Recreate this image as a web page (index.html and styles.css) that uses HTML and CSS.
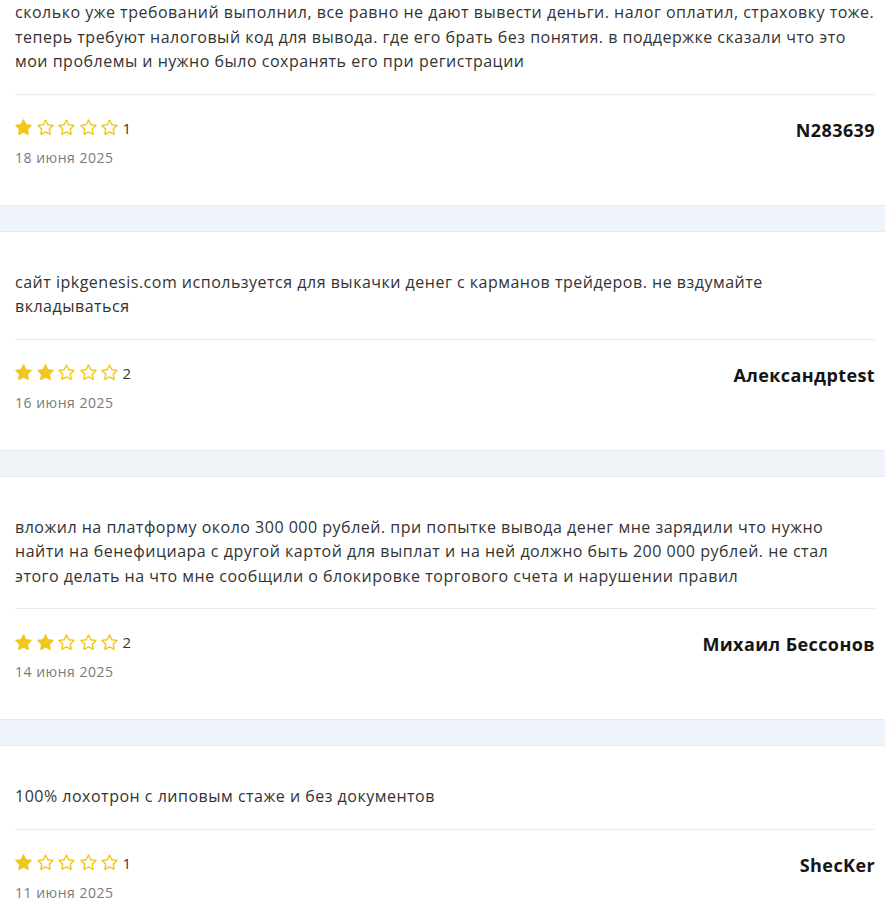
FILE: index.html
```html
<!DOCTYPE html>
<html lang="ru">
<head>
    <meta charset="UTF-8">
    <meta name="viewport" content="width=device-width, initial-scale=1.0">
    <title>Отзывы</title>
    <link rel="stylesheet" href="styles.css">
</head>
<body>

<svg width="0" height="0" class="defs">
    <defs>
        <path id="star" d="M12 2.5l2.94 5.96 6.56.95-4.75 4.63 1.12 6.54L12 17.49l-5.87 3.09 1.12-6.54L2.5 9.41l6.56-.95L12 2.5z"/>
    </defs>
</svg>

<div class="review review-first">
    <p class="review-text">сколько уже требований выполнил, все равно не дают вывести деньги. налог оплатил, страховку тоже. теперь требуют налоговый код для вывода. где его брать без понятия. в поддержке сказали что это мои проблемы и нужно было сохранять его при регистрации</p>
    <div class="review-footer">
        <div class="review-meta">
            <div class="rating">
                <svg class="star full" viewBox="0 0 24 24"><use href="#star"/></svg>
                <svg class="star" viewBox="0 0 24 24"><use href="#star"/></svg>
                <svg class="star" viewBox="0 0 24 24"><use href="#star"/></svg>
                <svg class="star" viewBox="0 0 24 24"><use href="#star"/></svg>
                <svg class="star" viewBox="0 0 24 24"><use href="#star"/></svg>
                <span class="rating-count">1</span>
            </div>
            <div class="review-date">18 июня 2025</div>
        </div>
        <div class="review-author">N283639</div>
    </div>
</div>
<div class="review-gap"></div>

<div class="review">
    <p class="review-text">сайт ipkgenesis.com используется для выкачки денег с карманов трейдеров. не вздумайте вкладываться</p>
    <div class="review-footer">
        <div class="review-meta">
            <div class="rating">
                <svg class="star full" viewBox="0 0 24 24"><use href="#star"/></svg>
                <svg class="star full" viewBox="0 0 24 24"><use href="#star"/></svg>
                <svg class="star" viewBox="0 0 24 24"><use href="#star"/></svg>
                <svg class="star" viewBox="0 0 24 24"><use href="#star"/></svg>
                <svg class="star" viewBox="0 0 24 24"><use href="#star"/></svg>
                <span class="rating-count">2</span>
            </div>
            <div class="review-date">16 июня 2025</div>
        </div>
        <div class="review-author">Александрtest</div>
    </div>
</div>
<div class="review-gap"></div>

<div class="review">
    <p class="review-text">вложил на платформу около 300 000 рублей. при попытке вывода денег мне зарядили что нужно найти на бенефициара с другой картой для выплат и на ней должно быть 200 000 рублей. не стал этого делать на что мне сообщили о блокировке торгового счета и нарушении правил</p>
    <div class="review-footer">
        <div class="review-meta">
            <div class="rating">
                <svg class="star full" viewBox="0 0 24 24"><use href="#star"/></svg>
                <svg class="star full" viewBox="0 0 24 24"><use href="#star"/></svg>
                <svg class="star" viewBox="0 0 24 24"><use href="#star"/></svg>
                <svg class="star" viewBox="0 0 24 24"><use href="#star"/></svg>
                <svg class="star" viewBox="0 0 24 24"><use href="#star"/></svg>
                <span class="rating-count">2</span>
            </div>
            <div class="review-date">14 июня 2025</div>
        </div>
        <div class="review-author">Михаил Бессонов</div>
    </div>
</div>
<div class="review-gap"></div>

<div class="review">
    <p class="review-text">100% лохотрон с липовым стаже и без документов</p>
    <div class="review-footer">
        <div class="review-meta">
            <div class="rating">
                <svg class="star full" viewBox="0 0 24 24"><use href="#star"/></svg>
                <svg class="star" viewBox="0 0 24 24"><use href="#star"/></svg>
                <svg class="star" viewBox="0 0 24 24"><use href="#star"/></svg>
                <svg class="star" viewBox="0 0 24 24"><use href="#star"/></svg>
                <svg class="star" viewBox="0 0 24 24"><use href="#star"/></svg>
                <span class="rating-count">1</span>
            </div>
            <div class="review-date">11 июня 2025</div>
        </div>
        <div class="review-author">ShecKer</div>
    </div>
</div>

</body>
</html>
```

FILE: styles.css
```css
body {
    font-family: "Open Sans", "Noto Sans", sans-serif;
    background-color: #ffffff;
    color: #333333;
    margin: 0;
    padding: 0;
}
.defs {
    position: absolute;
}
.review {
    background-color: #ffffff;
    padding: 38px 10px 37px 15px;
}
.review-first {
    padding-top: 0;
}
.review-text {
    margin: 0 0 20px 0;
    font-size: 16px;
    line-height: 24.5px;
    letter-spacing: 0.5px;
}
.review-footer {
    display: flex;
    justify-content: space-between;
    align-items: flex-start;
    border-top: 1px solid #ececec;
    padding-top: 23px;
}
.rating {
    display: flex;
    align-items: center;
    height: 20px;
}
.star {
    width: 19px;
    height: 19px;
    margin-left: -1px;
    margin-right: 3.5px;
    fill: none;
    stroke: #f1c71d;
    stroke-width: 1.8;
    stroke-linejoin: round;
}
.star.full {
    fill: #f1c71d;
}
.rating-count {
    font-size: 15px;
    color: #333333;
}
.review-date {
    margin-top: 10px;
    font-size: 14px;
    line-height: 20px;
    letter-spacing: 0.5px;
    color: #7a7a7a;
}
.review-author {
    font-size: 18px;
    font-weight: 700;
    line-height: 24px;
    letter-spacing: 0.4px;
    color: #151515;
}
.review-gap {
    height: 25px;
    background-color: #eff3fa;
    border-top: 1px solid #e6e9ee;
    border-bottom: 1px solid #e6e9ee;
}
```
